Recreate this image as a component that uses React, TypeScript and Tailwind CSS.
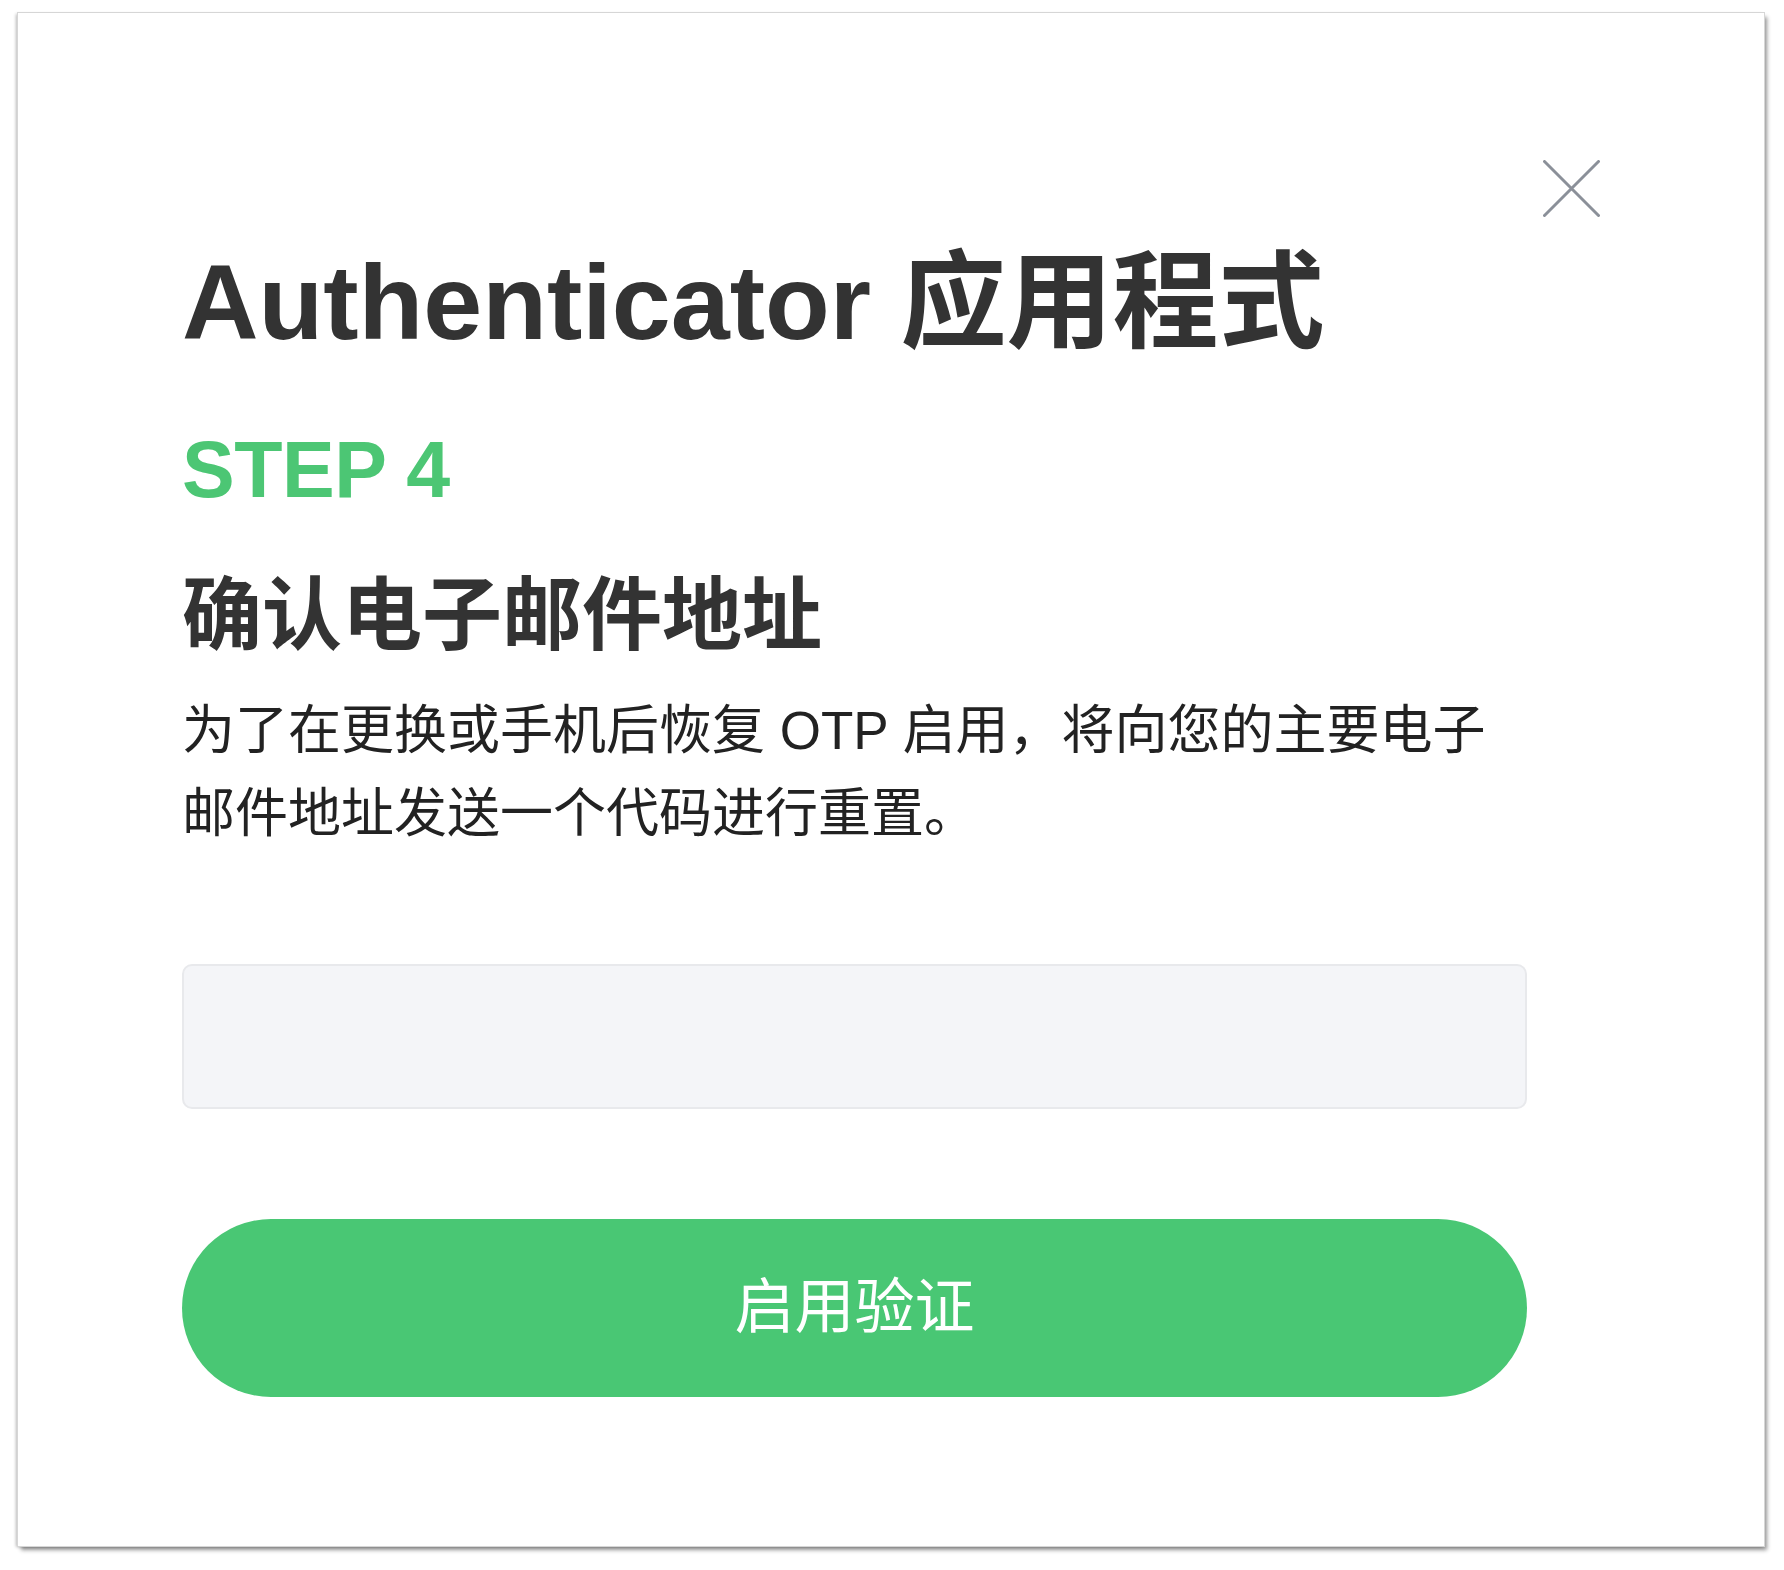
import React from "react";

export default function App() {
  const font = { fontFamily: '"Liberation Sans", "Noto Sans CJK SC", sans-serif' };
  return (
    <div className="min-h-[1570px] w-full bg-white pt-[13px] pl-[18px]" style={font}>
      <div className="relative flex h-[1533px] w-[1746px] flex-col bg-white pt-[236px] pl-[164px] pr-[237px] shadow-[0_0_0_1px_#d6d6d6,3px_4px_4px_rgba(0,0,0,0.42),-2px_1px_3px_rgba(0,0,0,0.28)]">
        <button className="absolute top-[147px] right-[164px] h-[57px] w-[57px]" aria-label="close">
          <svg viewBox="0 0 57 57" width="57" height="57">
            <path d="M1.5 1.5 L55.5 55.5 M55.5 1.5 L1.5 55.5" stroke="#8b9099" strokeWidth="3" strokeLinecap="round" />
          </svg>
        </button>
        <h1 className="text-[106px] font-bold leading-none text-[#333333]">Authenticator 应用程式</h1>
        <div className="mt-[75px] text-[79px] font-bold leading-none tracking-[-0.5px] text-[#4cc674]">STEP 4</div>
        <h2 className="mt-[67px] text-[80px] font-bold leading-none text-[#333333]">确认电子邮件地址</h2>
        <p className="mt-[33px] text-[53px] leading-[83px] text-[#222222]">
          为了在更换或手机后恢复 OTP 启用，将向您的主要电子邮件地址发送一个代码进行重置。
        </p>
        <input
          className="mt-[109px] h-[145px] w-full rounded-[10px] border-2 border-[#e8e9ec] bg-[#f4f5f8] outline-none"
          type="text"
        />
        <button className="mt-[110px] flex h-[178px] w-full items-center justify-center rounded-full bg-[#49c774] text-[60px] text-white">
          启用验证
        </button>
      </div>
    </div>
  );
}
